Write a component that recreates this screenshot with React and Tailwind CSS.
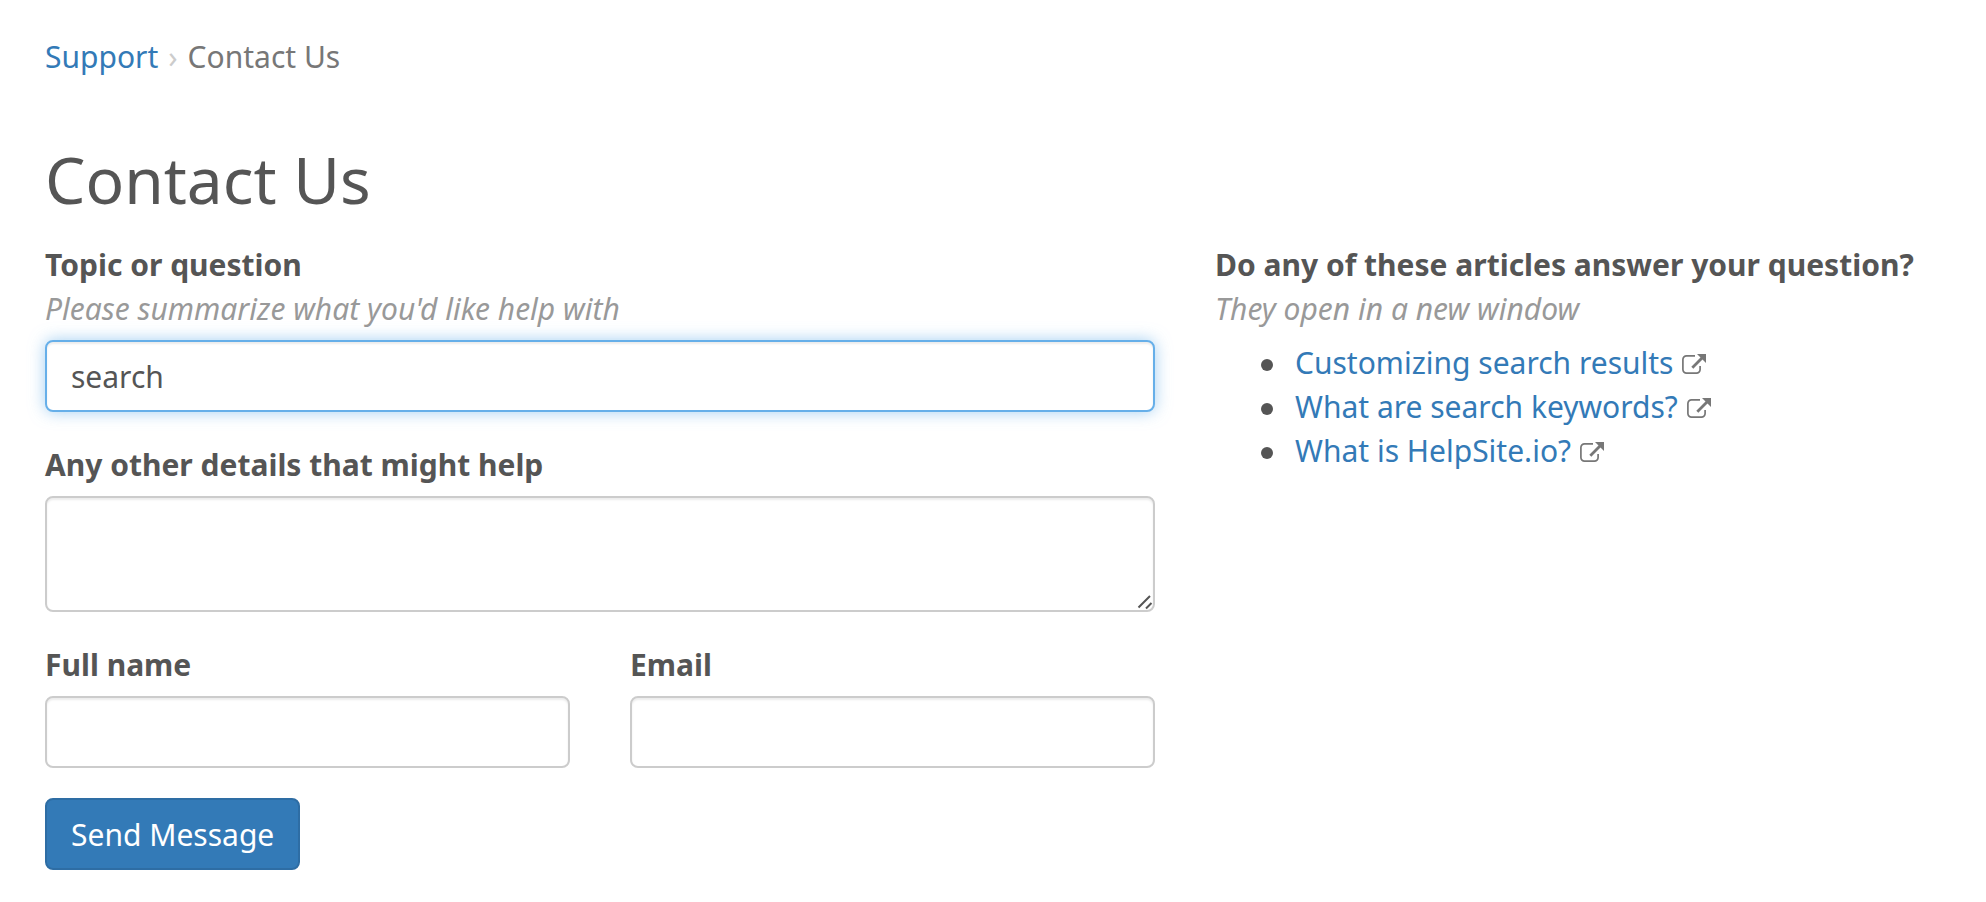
import React, { useState } from 'react';

const articles = [
  { id: 1, title: 'Customizing search results' },
  { id: 2, title: 'What are search keywords?' },
  { id: 3, title: 'What is HelpSite.io?' },
];

const labelClass = 'block pt-px font-bold';
const fieldClass =
  'block w-full rounded-lg border-2 bg-white px-6 outline-none';
const idleClass =
  'border-[#cccccc] shadow-[inset_0_2px_2px_rgba(0,0,0,0.075)]';
const activeClass =
  'border-[#66afe9] shadow-[inset_0_2px_2px_rgba(0,0,0,0.075),0_0_16px_rgba(102,175,233,0.6)]';

const ExternalIcon = () => (
  <svg className="ml-px inline-block h-6 w-6 align-[-2px]" viewBox="0 0 24 24" fill="none" aria-hidden="true">
    <path
      d="M13 3.9H4.500A3.600 3.600 0 0 0 0.900 7.500V17.500A3.600 3.600 0 0 0 4.500 21.100H14.500A3.600 3.600 0 0 0 18.100 17.500V14"
      stroke="#777777"
      strokeWidth="1.7"
    />
    <path d="M10.300 15.700L21 5" stroke="#777777" strokeWidth="2.8" />
    <path d="M15 2H24v9z" fill="#777777" />
  </svg>
);

const Field = ({ id, label, type = 'text', value, onChange, hint, active }) => (
  <div>
    <label htmlFor={id} className={labelClass}>{label}</label>
    {hint && <p className="text-[#999999] italic">{hint}</p>}
    <input
      id={id}
      type={type}
      value={value}
      onChange={onChange}
      className={`mt-[9px] h-[72px] ${fieldClass} ${active ? activeClass : idleClass}`}
    />
  </div>
);

const App = () => {
  const [form, setForm] = useState({ topic: 'search', details: '', name: '', email: '' });

  const update = (key) => (e) => setForm({ ...form, [key]: e.target.value });

  return (
    <div className="bg-white pt-[35px] pr-[31px] pb-8 pl-[45px] font-['Noto_Sans',sans-serif] text-[30px] leading-[44px] text-[#555555]">
      {/* Breadcrumb */}
      <nav className="flex gap-[10px]">
        <a href="#support" className="text-[#337ab7]">Support</a>
        <span className="text-[#cccccc]">›</span>
        <span className="text-[#777777]">Contact Us</span>
      </nav>

      <h1 className="mt-[66px] mb-[27px] text-[64px] leading-[70px]">Contact Us</h1>

      <div className="grid grid-cols-[3fr_2fr] gap-[60px]">
        <form className="space-y-[30px]" onSubmit={(e) => e.preventDefault()}>
          <Field
            id="topic"
            label="Topic or question"
            hint="Please summarize what you'd like help with"
            value={form.topic}
            onChange={update('topic')}
            active
          />

          <div>
            <label htmlFor="details" className={labelClass}>Any other details that might help</label>
            <div className="relative mt-[9px]">
              <textarea
                id="details"
                value={form.details}
                onChange={update('details')}
                className={`h-[116px] resize-none py-3 ${fieldClass} ${idleClass}`}
              />
              {/* Resize grip */}
              <svg className="pointer-events-none absolute right-[2px] bottom-[2px] h-4 w-4" viewBox="0 0 16 16" aria-hidden="true">
                <path d="M1.5 13.5L13 2M9 14.5L14.5 9" stroke="#555555" strokeWidth="2" />
              </svg>
            </div>
          </div>

          <div className="grid grid-cols-2 gap-[60px]">
            <Field id="name" label="Full name" value={form.name} onChange={update('name')} />
            <Field id="email" label="Email" type="email" value={form.email} onChange={update('email')} />
          </div>

          <button
            type="submit"
            className="block h-[72px] rounded-lg border-2 border-[#2e6da4] bg-[#337ab7] px-6 pt-0.5 text-white"
          >
            Send Message
          </button>
        </form>

        {/* Suggested articles */}
        <aside>
          <h2 className="pt-px font-bold whitespace-nowrap">Do any of these articles answer your question?</h2>
          <p className="text-[#999999] italic">They open in a new window</p>
          <ul className="mt-[10px] pl-20">
            {articles.map((article) => (
              <li
                key={article.id}
                className="before:mr-[22px] before:-ml-[34px] before:inline-block before:h-3 before:w-3 before:rounded-full before:bg-[#555555] before:align-[3px] before:content-['']"
              >
                <a href={`#article-${article.id}`} target="_blank" rel="noreferrer" className="text-[#337ab7]">
                  {article.title} <ExternalIcon />
                </a>
              </li>
            ))}
          </ul>
        </aside>
      </div>
    </div>
  );
};

export default App;
